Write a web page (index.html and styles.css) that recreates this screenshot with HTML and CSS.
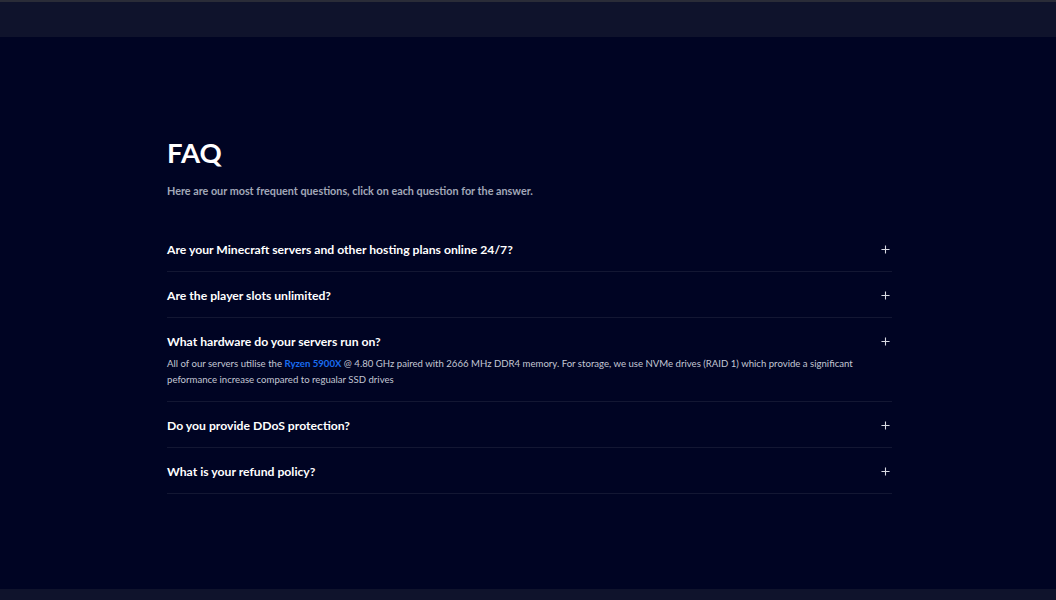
FILE: index.html
```html
<!DOCTYPE html>
<html lang="en">
<head>
  <meta charset="UTF-8" />
  <meta name="viewport" content="width=device-width, initial-scale=1.0"/>
  <title>FAQ</title>
  <link rel="stylesheet" href="styles.css">
</head>
<body>

  <header class="top-bar"></header>

  <main class="faq">
    <h1 class="faq-title">FAQ</h1>
    <p class="faq-subtitle">Here are our most frequent questions, click on each question for the answer.</p>

    <div class="faq-list">
      <div class="faq-item">
        <div class="faq-question">
          <span>Are your Minecraft servers and other hosting plans online 24/7?</span>
          <svg class="plus" viewBox="0 0 10 10"><path d="M5 0.5v9M0.5 5h9"/></svg>
        </div>
      </div>

      <div class="faq-item">
        <div class="faq-question">
          <span>Are the player slots unlimited?</span>
          <svg class="plus" viewBox="0 0 10 10"><path d="M5 0.5v9M0.5 5h9"/></svg>
        </div>
      </div>

      <div class="faq-item open">
        <div class="faq-question">
          <span>What hardware do your servers run on?</span>
          <svg class="plus" viewBox="0 0 10 10"><path d="M5 0.5v9M0.5 5h9"/></svg>
        </div>
        <p class="faq-answer">All of our servers utilise the <b class="accent">Ryzen 5900X</b> @ 4.80 GHz paired with 2666 MHz DDR4 memory. For storage, we use NVMe drives (RAID 1) which provide a significant peformance increase compared to regualar SSD drives</p>
      </div>

      <div class="faq-item">
        <div class="faq-question">
          <span>Do you provide DDoS protection?</span>
          <svg class="plus" viewBox="0 0 10 10"><path d="M5 0.5v9M0.5 5h9"/></svg>
        </div>
      </div>

      <div class="faq-item">
        <div class="faq-question">
          <span>What is your refund policy?</span>
          <svg class="plus" viewBox="0 0 10 10"><path d="M5 0.5v9M0.5 5h9"/></svg>
        </div>
      </div>
    </div>
  </main>

  <footer class="bottom-bar"></footer>

</body>
</html>
```

FILE: styles.css
```css
body {
  margin: 0;
  padding: 0;
  font-family: Lato, "Open Sans", sans-serif;
  background-color: #000423;
  color: #ffffff;
  overflow: hidden;
}

.top-bar {
  height: 35px;
  border-top: 2px solid #2a2c38;
  background-color: #0f132c;
}

.faq {
  width: 725px;
  margin-left: 167px;
  padding-top: 97px;
  height: 455px;
}

.faq-title {
  margin: 0;
  font-size: 27.5px;
  font-weight: 700;
  line-height: 38px;
}

.faq-subtitle {
  margin: 11px 0 0 0;
  font-size: 10.8px;
  font-weight: 700;
  line-height: 16px;
  color: #a2a8b8;
}

.faq-list {
  margin-top: 27px;
}

.faq-item {
  padding: 16px 0 13px 0;
  border-bottom: 1px solid #131733;
}

.faq-question {
  display: flex;
  justify-content: space-between;
  align-items: center;
  font-size: 12.2px;
  font-weight: 700;
  line-height: 16px;
}

.plus {
  width: 9px;
  height: 9px;
  margin-right: 2px;
  margin-top: -2px;
  stroke: #d8dae2;
  stroke-width: 1.2;
  fill: none;
}

.faq-answer {
  margin: 6px 0 0 0;
  font-size: 9.6px;
  line-height: 16px;
  color: #c3c7d3;
  max-width: 700px;
}

.accent {
  color: #1a6cf0;
  font-weight: 700;
}

.bottom-bar {
  height: 20px;
  background-color: #0f132c;
}
```
